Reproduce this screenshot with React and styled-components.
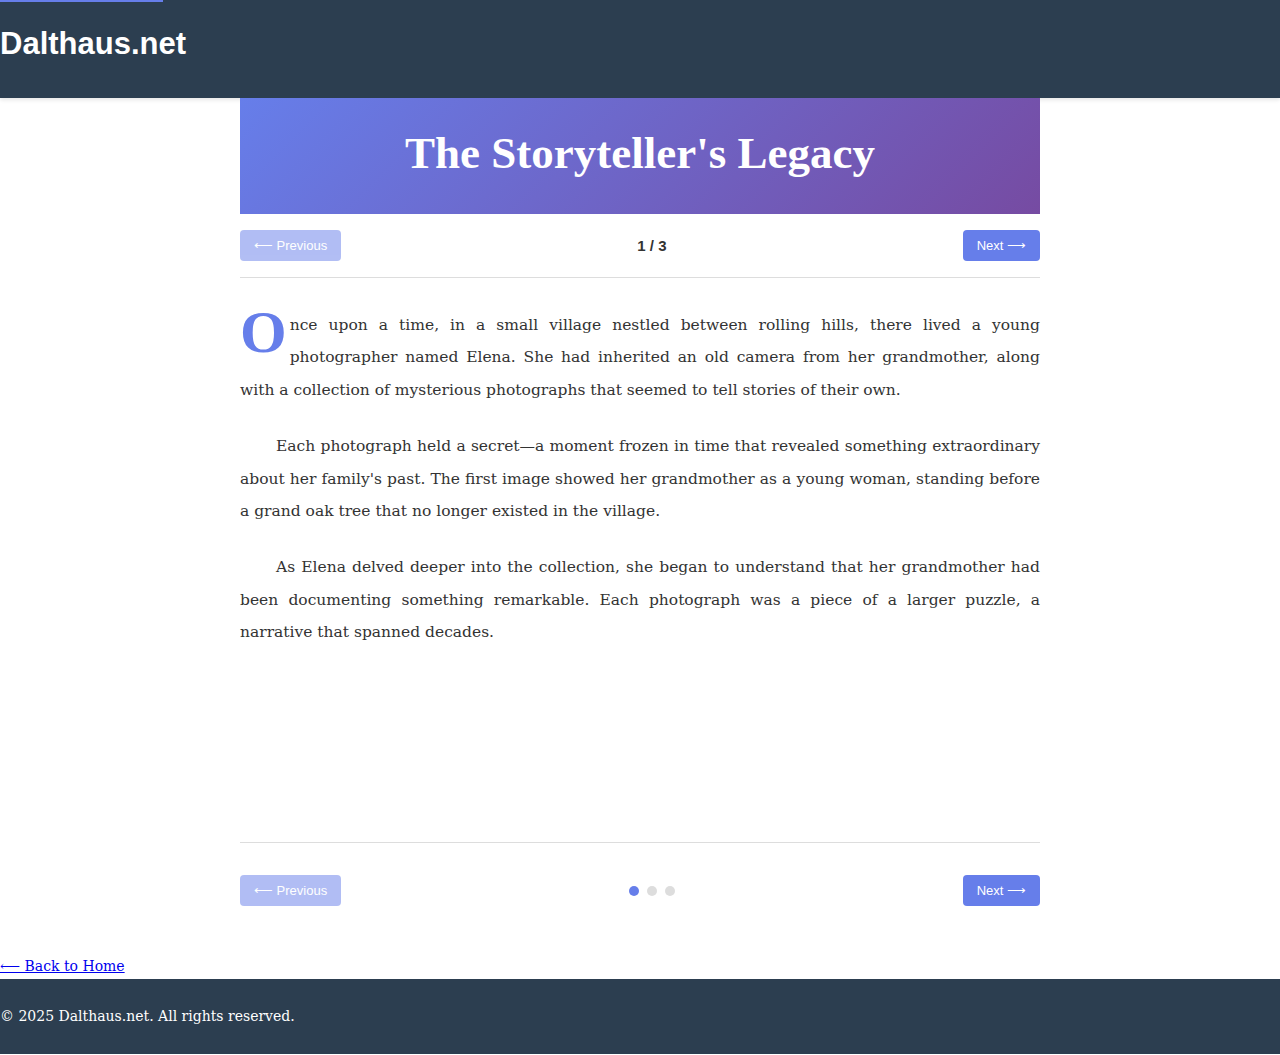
import styled, { createGlobalStyle } from 'styled-components';

const GlobalStyle = createGlobalStyle`
  body {
    margin: 0;
    background: #fff;
    font-family: "DejaVu Serif", serif;
    color: #333;
  }
`;

const Progress = styled.div`
  position: fixed;
  top: 0;
  left: 0;
  height: 2px;
  width: ${(p) => p.$pct}%;
  background: #667eea;
  z-index: 10;
`;

const Header = styled.header`
  height: 98px;
  display: flex;
  align-items: center;
  background: #2c3e50;
  box-shadow: 0 2px 4px rgba(0, 0, 0, 0.1);
  padding-bottom: 10px;
  box-sizing: border-box;
`;

const Logo = styled.h1`
  margin: 0;
  font-family: "Liberation Sans", Arial, sans-serif;
  font-size: 31px;
  font-weight: bold;
  color: #fff;
`;

const Story = styled.main`
  width: 800px;
  margin: 0 auto 49px;
`;

const Banner = styled.div`
  height: 116px;
  display: flex;
  align-items: center;
  justify-content: center;
  padding-bottom: 6px;
  box-sizing: border-box;
  background: linear-gradient(135deg, #667eea 0%, #764ba2 100%);
`;

const Title = styled.h2`
  margin: 0;
  font-family: "Liberation Serif", serif;
  font-size: 45px;
  font-weight: bold;
  color: #fff;
`;

const Nav = styled.div`
  display: flex;
  justify-content: space-between;
  align-items: center;
  padding: ${(p) => (p.$bottom ? '32px 0 0' : '16px 0')};
  border-top: ${(p) => (p.$bottom ? '1px solid #ddd' : 'none')};
  border-bottom: ${(p) => (p.$bottom ? 'none' : '1px solid #ddd')};
`;

const NavButton = styled.button`
  height: 31px;
  padding: 0 14px;
  border: none;
  border-radius: 4px;
  background: #667eea;
  color: #fff;
  font-family: "Liberation Sans", Arial, sans-serif;
  font-size: 13px;
  opacity: ${(p) => (p.disabled ? 0.5 : 1)};
  cursor: ${(p) => (p.disabled ? 'default' : 'pointer')};
`;

const PageCount = styled.span`
  font-family: "Liberation Sans", Arial, sans-serif;
  font-size: 15px;
  font-weight: bold;
  color: #333;
`;

const Dots = styled.div`
  display: flex;
  gap: 8px;
`;

const Dot = styled.span`
  width: 10px;
  height: 10px;
  border-radius: 50%;
  background: ${(p) => (p.$active ? '#667eea' : '#ddd')};
`;

const Content = styled.div`
  min-height: 564px;
  box-sizing: border-box;
  padding-top: 31px;
`;

const Para = styled.p`
  margin: 0 0 24px;
  font-size: 15.5px;
  line-height: 32.4px;
  text-align: justify;
  text-indent: ${(p) => (p.$first ? '0' : '36px')};
`;

const DropCap = styled.span`
  float: left;
  font-family: "Liberation Serif", serif;
  font-size: 60px;
  line-height: 52px;
  font-weight: bold;
  color: #667eea;
  margin: -3px 3px 0 0;
`;

const HomeLink = styled.a`
  display: block;
  font-size: 14px;
  line-height: 23px;
  color: #0000ee;
`;

const Footer = styled.footer`
  padding: 24px 0 25px;
  margin-top: 1px;
  background: #2c3e50;
  color: #fff;
  font-size: 14px;
  line-height: 26px;
`;

function PageNav({ bottom }) {
  return (
    <Nav $bottom={bottom}>
      <NavButton disabled>⟵ Previous</NavButton>
      {bottom ? (
        <Dots>
          <Dot $active />
          <Dot />
          <Dot />
        </Dots>
      ) : (
        <PageCount>1 / 3</PageCount>
      )}
      <NavButton>Next ⟶</NavButton>
    </Nav>
  );
}

export default function App() {
  return (
    <>
      <GlobalStyle />
      <Progress $pct={12.75} />
      <Header>
        <Logo>Dalthaus.net</Logo>
      </Header>
      <Story>
        <Banner>
          <Title>The Storyteller&apos;s Legacy</Title>
        </Banner>
        <PageNav />
        <Content>
          <Para $first>
            <DropCap>O</DropCap>nce upon a time, in a small village nestled between rolling hills, there lived a young
            photographer named Elena. She had inherited an old camera from her grandmother, along with a collection of
            mysterious photographs that seemed to tell stories of their own.
          </Para>
          <Para>
            Each photograph held a secret—a moment frozen in time that revealed something extraordinary about her
            family&apos;s past. The first image showed her grandmother as a young woman, standing before a grand oak tree
            that no longer existed in the village.
          </Para>
          <Para>
            As Elena delved deeper into the collection, she began to understand that her grandmother had been
            documenting something remarkable. Each photograph was a piece of a larger puzzle, a narrative that spanned
            decades.
          </Para>
        </Content>
        <PageNav bottom />
      </Story>
      <HomeLink href="#">⟵ Back to Home</HomeLink>
      <Footer>© 2025 Dalthaus.net. All rights reserved.</Footer>
    </>
  );
}
